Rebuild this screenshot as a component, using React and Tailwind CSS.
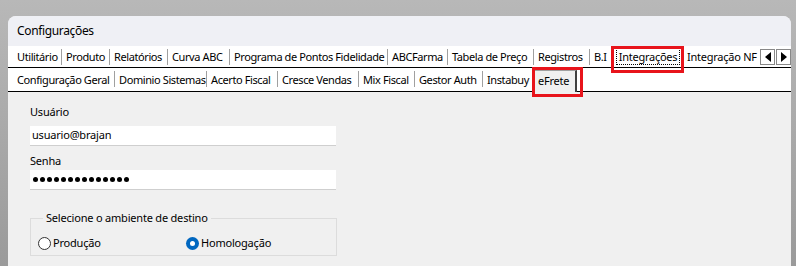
const font = { fontFamily: '"Noto Sans", "Open Sans", Arial, sans-serif' };

const topTabs = [
  { label: "Utilitário", w: "w-[54px]", pl: "pl-[9px]" },
  { label: "Produto", w: "w-[48px]" },
  { label: "Relatórios", w: "w-[58px]" },
  { label: "Curva ABC", w: "w-[62px]" },
  { label: "Programa de Pontos Fidelidade", w: "w-[158px]" },
  { label: "ABCFarma", w: "w-[60px]" },
  { label: "Tabela de Preço", w: "w-[86px]" },
  { label: "Registros", w: "w-[56px]" },
  { label: "B.I", w: "w-[22px]", last: true },
];

const subTabs = [
  { label: "Configuração Geral", w: "w-[107px]", pl: "pl-[9px]" },
  { label: "Dominio Sistemas", w: "w-[92px]" },
  { label: "Acerto Fiscal", w: "w-[71px]" },
  { label: "Cresce Vendas", w: "w-[81px]" },
  { label: "Mix Fiscal", w: "w-[56px]" },
  { label: "Gestor Auth", w: "w-[68px]" },
  { label: "Instabuy", w: "w-[43px]", last: true },
];

function Tab({ label, w, pl = "pl-[4px]", last }) {
  return (
    <div className={`relative flex h-full shrink-0 items-center whitespace-nowrap ${w} ${pl}`}>
      <span className="text-[11px] leading-none tracking-[-0.4px] text-black">{label}</span>
      {!last && <div className="absolute right-0 top-[3px] h-[16px] w-px bg-[#a0a0a0]" />}
    </div>
  );
}

function Radio({ checked, label }) {
  return (
    <label className="flex items-center gap-[2px] text-[11px] tracking-[-0.2px] text-black">
      {checked ? (
        <span className="flex h-[13px] w-[13px] items-center justify-center rounded-full bg-[#0067c0]">
          <span className="h-[5px] w-[5px] rounded-full bg-white" />
        </span>
      ) : (
        <span className="h-[13px] w-[13px] rounded-full border border-[#333] bg-white" />
      )}
      {label}
    </label>
  );
}

export default function App() {
  return (
    <div
      className="relative h-[266px] w-[796px] overflow-hidden bg-gradient-to-b from-[#b8b8b8] to-[#9a9a9a] pl-[8px] pt-[16px]"
      style={font}
    >
      <div className="flex h-[300px] w-[783px] flex-col overflow-hidden rounded-t-[8px] bg-[#f0f0f0]">
        {/* title bar */}
        <div className="flex h-[30px] items-center bg-[#eff0f5] pl-[9px] text-[12px] tracking-[-0.35px] text-black">
          Configurações
        </div>

        {/* main tab strip */}
        <div className="flex h-[22px] items-stretch border-b border-black bg-white">
          {topTabs.map((t) => (
            <Tab key={t.label} {...t} />
          ))}
          <div className="flex w-[72px] shrink-0 items-center justify-center">
            <span className="border border-dotted border-black px-[2px] py-[2px] text-[11px] leading-none tracking-[-0.25px] text-black">
              Integrações
            </span>
          </div>
          <div className="flex w-[76px] shrink-0 items-center overflow-hidden whitespace-nowrap pl-[3px]">
            <span className="text-[11px] leading-none tracking-[-0.25px] text-black">Integração NF</span>
          </div>
          <div className="flex items-center gap-px">
            <button className="flex h-[16px] w-[15px] items-center justify-center border border-[#888] bg-white">
              <svg width="6" height="10" viewBox="0 0 6 10"><path d="M6 0 L0 5 L6 10 Z" fill="black" /></svg>
            </button>
            <button className="flex h-[16px] w-[15px] items-center justify-center border border-[#888] bg-white">
              <svg width="6" height="10" viewBox="0 0 6 10"><path d="M0 0 L6 5 L0 10 Z" fill="black" /></svg>
            </button>
          </div>
        </div>

        {/* sub tab strip */}
        <div className="flex h-[24px] items-stretch bg-white">
          <div className="flex border-b border-black">
            {subTabs.map((t) => (
              <Tab key={t.label} {...t} />
            ))}
            <div className="w-[6px]" />
          </div>
          <div className="mt-[2px] flex w-[45px] shrink-0 items-center border-l border-r-2 border-t border-l-[#a0a0a0] border-r-[#404040] border-t-[#a0a0a0] bg-[#f0f0f0] pl-[5px] text-[11px] tracking-[-0.25px] text-black">
            eFrete
          </div>
          <div className="flex-1 border-b border-black" />
        </div>

        {/* content */}
        <div className="flex flex-col pl-[22px] pt-[12px] text-[11px] tracking-[-0.2px] text-black">
          <div className="leading-[16px]">Usuário</div>
          <div className="mt-[6px] flex h-[20px] w-[306px] items-center border-b border-[#cfcfcf] bg-white pl-[2px]">
            usuario@brajan
          </div>
          <div className="mt-[7px] leading-[16px]">Senha</div>
          <div className="mt-[1px] flex h-[20px] w-[306px] items-center gap-[2px] border-b border-[#cfcfcf] bg-white pl-[3px]">
            {Array.from({ length: 14 }).map((_, i) => (
              <span key={i} className="h-[5px] w-[5px] rounded-full bg-black" />
            ))}
          </div>
          <fieldset className="mt-[20px] h-[46px] w-[307px] border border-[#dcdcdc] px-[7px] pb-0 pt-0">
            <legend className="ml-[5px] px-[3px] leading-[16px]">Selecione o ambiente de destino</legend>
            <div className="mt-[9px] flex">
              <div className="w-[148px]">
                <Radio label="Produção" />
              </div>
              <Radio checked label="Homologação" />
            </div>
          </fieldset>
        </div>
      </div>

      {/* highlight boxes */}
      <div className="absolute left-[611px] top-[46px] h-[27px] w-[73px] border-[3px] border-[#e8141b]" />
      <div className="absolute left-[532px] top-[67px] h-[30px] w-[51px] border-[3px] border-[#e8141b]" />
    </div>
  );
}
